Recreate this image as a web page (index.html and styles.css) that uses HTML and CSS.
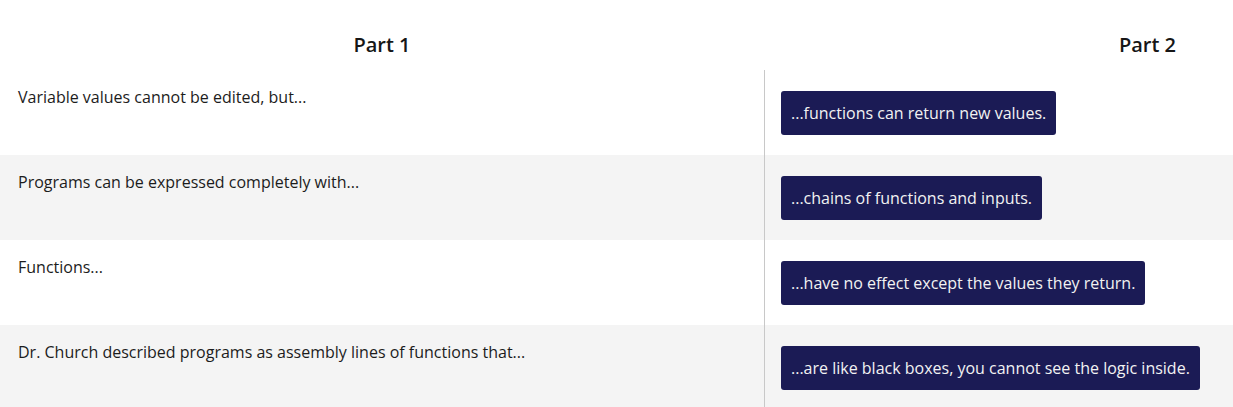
FILE: index.html
```html
<!DOCTYPE html>
<html>
<head>
<meta charset="utf-8">
<link rel="stylesheet" href="styles.css">
</head>
<body>
<div class="match">
  <div class="head">
    <div class="h1">Part 1</div>
    <div class="h2">Part 2</div>
  </div>
  <div class="row">
    <div class="left">Variable values cannot be edited, but...</div>
    <div class="right"><span class="chip">...functions can return new values.</span></div>
  </div>
  <div class="row alt">
    <div class="left">Programs can be expressed completely with...</div>
    <div class="right"><span class="chip">...chains of functions and inputs.</span></div>
  </div>
  <div class="row">
    <div class="left">Functions...</div>
    <div class="right"><span class="chip">...have no effect except the values they return.</span></div>
  </div>
  <div class="row alt">
    <div class="left">Dr. Church described programs as assembly lines of functions that...</div>
    <div class="right"><span class="chip">...are like black boxes, you cannot see the logic inside.</span></div>
  </div>
</div>
</body>
</html>
```

FILE: styles.css
```css
html, body {
  margin: 0;
  padding: 0;
  background: #ffffff;
}
body {
  font-family: "Open Sans", "Liberation Sans", sans-serif;
  color: #1c1c1c;
}
.match {
  display: flex;
  flex-direction: column;
}
.head {
  display: grid;
  grid-template-columns: 765px 1fr;
  box-sizing: border-box;
  height: 70px;
  padding-top: 32px;
  align-items: start;
  font-weight: 600;
  font-size: 20px;
  line-height: 26px;
  color: #161616;
}
.h1 {
  text-align: center;
  padding-right: 1px;
}
.h2 {
  text-align: right;
  padding-right: 57px;
}
.row {
  display: grid;
  grid-template-columns: 765px 1fr;
  background: #ffffff;
}
.row.alt {
  background: #f4f4f4;
}
.left {
  padding: 17px 18px;
  font-size: 16px;
  line-height: 20px;
  border-right: 1px solid #c8c8c8;
}
.right {
  padding: 21px 16px 20px 16px;
  display: flex;
  align-items: flex-start;
}
.chip {
  display: inline-block;
  background: #1b1b55;
  color: #f2f2f2;
  font-size: 16px;
  line-height: 20px;
  padding: 12px 10px;
  border-radius: 3px;
}
```
